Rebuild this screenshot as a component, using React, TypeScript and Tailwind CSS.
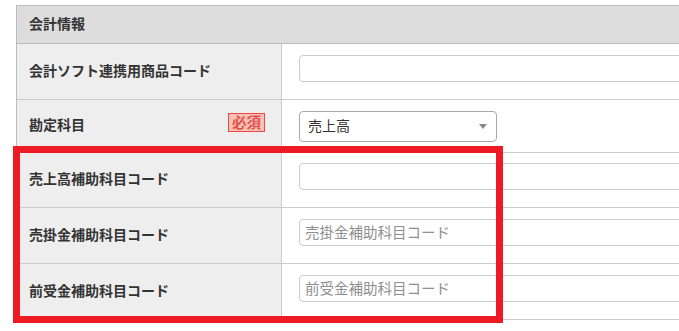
import React from "react";

const font = { fontFamily: '"Noto Sans CJK JP", "Noto Sans", sans-serif' };

function Label({ children, badge }: { children: React.ReactNode; badge?: boolean }) {
  return (
    <div className="w-[265px] shrink-0 bg-[#eeeeee] border-r border-[#cccccc] flex items-center justify-between pl-[12px] pr-[16px] pb-[4px]">
      <span className="text-[14px] font-bold text-[#333333] leading-none">{children}</span>
      {badge && (
        <span className="h-[19px] px-[3px] mb-[3px] flex items-center border border-[#f04545] bg-[#f7c2b6] text-[#e2524f] text-[14.5px] font-bold leading-none">
          必須
        </span>
      )}
    </div>
  );
}

function TextInput({ placeholder }: { placeholder?: string }) {
  return (
    <input
      readOnly
      placeholder={placeholder}
      className="w-[400px] h-[27px] border border-[#cccccc] rounded-[4px] px-[5px] pb-[2px] text-[14.5px] text-[#333333] placeholder:text-[#8f8f8f] bg-white outline-none"
      style={font}
    />
  );
}

export default function App() {
  return (
    <div className="relative w-[679px] h-[331px] overflow-hidden bg-white" style={font}>
      <div className="ml-[16px] mt-[5px] w-[720px] border-t border-l border-[#bbbbbb]">
        <div className="h-[38px] bg-[#dddddd] border-b border-[#bbbbbb] flex items-center pl-[12px] pb-[3px]">
          <span className="text-[14px] font-bold text-[#333333] leading-none">会計情報</span>
        </div>
        <div className="h-[56px] flex border-b border-[#cccccc]">
          <Label>会計ソフト連携用商品コード</Label>
          <div className="flex-1 pl-[17px] pt-[11px]">
            <TextInput />
          </div>
        </div>
        <div className="h-[53px] flex border-b border-[#cccccc]">
          <Label badge>勘定科目</Label>
          <div className="flex-1 pl-[17px] flex items-center">
            <div className="w-[198px] h-[31px] border border-[#aaaaaa] rounded-[4px] flex items-center justify-between pl-[8px] pr-[9px] pb-[2px] bg-white">
              <span className="text-[14px] text-[#333333] leading-none">売上高</span>
              <svg width="8" height="5" viewBox="0 0 8 5" className="mt-[2px]">
                <path d="M0 0 L8 0 L4 5 Z" fill="#888888" />
              </svg>
            </div>
          </div>
        </div>
        <div className="h-[55px] flex border-b border-[#cccccc]">
          <Label>売上高補助科目コード</Label>
          <div className="flex-1 pl-[17px] pt-[10px]">
            <TextInput />
          </div>
        </div>
        <div className="h-[56px] flex border-b border-[#cccccc]">
          <Label>売掛金補助科目コード</Label>
          <div className="flex-1 pl-[17px] pt-[11px]">
            <TextInput placeholder="売掛金補助科目コード" />
          </div>
        </div>
        <div className="h-[56px] flex border-b border-[#cccccc]">
          <Label>前受金補助科目コード</Label>
          <div className="flex-1 pl-[17px] pt-[11px]">
            <TextInput placeholder="前受金補助科目コード" />
          </div>
        </div>
      </div>
      <div className="absolute left-[13px] top-[146px] w-[490px] h-[177px] border-[7px] border-[#ed1c24] pointer-events-none" />
    </div>
  );
}
